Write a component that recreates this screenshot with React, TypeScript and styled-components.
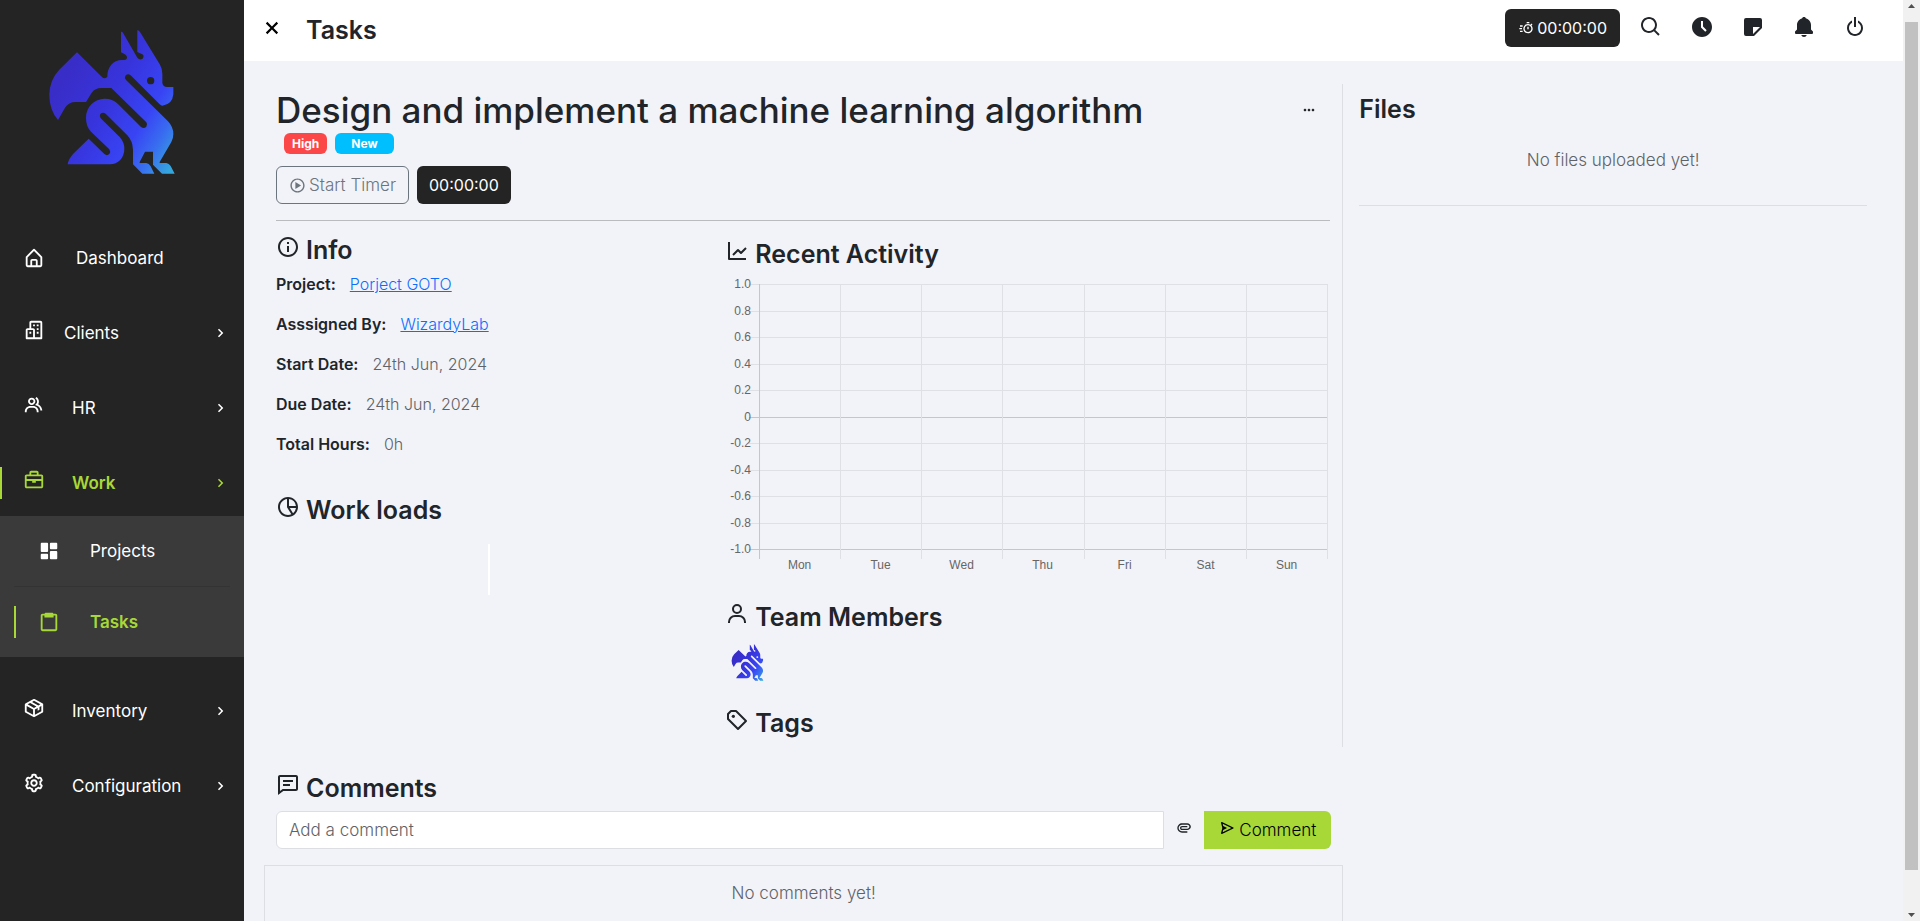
import React, { useId } from 'react';
import styled, { createGlobalStyle, css } from 'styled-components';
import type { IconType } from 'react-icons';
import {
  BiBriefcase,
  BiBuildings,
  BiChevronRight,
  BiClipboard,
  BiCog,
  BiCommentDetail,
  BiDotsHorizontalRounded,
  BiGroup,
  BiHomeAlt,
  BiInfoCircle,
  BiLineChart,
  BiPackage,
  BiPaperclip,
  BiPieChartAlt2,
  BiPlayCircle,
  BiPowerOff,
  BiPurchaseTagAlt,
  BiSearch,
  BiSend,
  BiSolidBell,
  BiSolidDashboard,
  BiSolidNote,
  BiSolidTimeFive,
  BiTimer,
  BiUser,
  BiX,
} from 'react-icons/bi';

const color = {
  dark: '#242424',
  submenu: '#3a3a3a',
  lime: '#a7d837',
  ink: '#212529',
  muted: '#5f6368',
  page: '#f2f3f8',
  line: '#dcdee3',
  link: '#0d6efd',
};

const GlobalStyle = createGlobalStyle`
  *, *::before, *::after { box-sizing: border-box; }
  body {
    margin: 0;
    background: ${color.page};
    color: ${color.ink};
    font-family: Inter, "Open Sans", sans-serif;
    font-size: 17px;
    line-height: 24px;
  }
  h1, h2, p, ul, dl, dd, dt { margin: 0; padding: 0; }
  ul { list-style: none; }
  a { color: inherit; text-decoration: none; }
  button, input { font: inherit; color: inherit; margin: 0; }
  button { border: 0; padding: 0; background: none; cursor: pointer; }
  svg { display: block; flex: none; }
`;

const Shell = styled.div`
  display: flex;
  height: 100vh;
  overflow: hidden;
`;

/* ---------- sidebar ---------- */

const Sidebar = styled.aside`
  flex: 0 0 244px;
  background: ${color.dark};
  color: #fff;
`;

const Brand = styled.a`
  display: block;
  width: 130px;
  margin: 29px 0 50px 47px;
`;

const NavList = styled.ul`
  display: flex;
  flex-direction: column;
  gap: 9px;
`;

const activeBar = css`
  color: ${color.lime};
  font-weight: 600;
  &::before {
    content: '';
    position: absolute;
    left: 0;
    top: 50%;
    width: 2px;
    height: 32px;
    margin-top: -16px;
    background: ${color.lime};
  }
`;

const NavLink = styled.a<{ $active?: boolean; $gap: number }>`
  position: relative;
  display: flex;
  align-items: center;
  height: 66px;
  padding: 0 15px 0 23px;
  gap: ${p => p.$gap}px;
  ${p => p.$active && activeBar}
`;

const NavIcon = styled.span<{ $raised?: boolean }>`
  padding-bottom: ${p => (p.$raised ? 6 : 0)}px;
`;

const NavLabel = styled.span`
  flex: 1;
`;

const SubList = styled.ul`
  margin-bottom: 12px;
  padding: 0 14px;
  background: ${color.submenu};
`;

const SubItem = styled.li`
  & + & { border-top: 1px solid #333; }
`;

const SubLink = styled.a<{ $active?: boolean }>`
  position: relative;
  display: flex;
  align-items: center;
  gap: 30px;
  height: 70px;
  padding: 0 0 0 24px;
  ${p => p.$active && activeBar}
`;

/* ---------- top bar ---------- */

const Page = styled.div`
  flex: 1;
  min-width: 0;
`;

const TopBar = styled.header`
  display: flex;
  align-items: center;
  height: 61px;
  padding: 0 36px 6px 15px;
  background: #fff;
`;

const CloseButton = styled.button`
  color: #000;
`;

const PageTitle = styled.p`
  flex: 1;
  padding: 5px 0 0 21px;
  font-size: 25px;
  font-weight: 600;
  line-height: 30px;
`;

const IconBar = styled.nav`
  display: flex;
  gap: 27px;
  margin-left: 19px;
  padding-bottom: 2px;
`;

const timerBox = css`
  display: inline-flex;
  align-items: center;
  justify-content: center;
  height: 38px;
  border-radius: 6px;
`;

const DarkTimer = styled.button<{ $pad: number }>`
  ${timerBox}
  gap: 3px;
  padding: 0 ${p => p.$pad}px;
  background: ${color.dark};
  color: #fff;
  font-size: 16px;
`;

const StartTimer = styled.button`
  ${timerBox}
  gap: 3px;
  width: 133px;
  border: 1px solid #6c757d;
  color: #6c757d;
  font-weight: 300;
`;

/* ---------- content ---------- */

const Content = styled.div`
  display: grid;
  grid-template-columns: 2fr 1fr;
  align-items: start;
  padding: 23px 20px 0;
`;

const Details = styled.section`
  padding: 5px 12px 9px;
  border-right: 1px solid ${color.line};
`;

const TitleRow = styled.div`
  display: flex;
  align-items: center;
  justify-content: space-between;
  padding-right: 13px;
`;

const TaskTitle = styled.h1`
  font-size: 35px;
  font-weight: 500;
  line-height: 42px;
`;

const Badges = styled.div`
  display: flex;
  gap: 8px;
  margin: 2px 0 12px 8px;
`;

const Badge = styled.span<{ $bg: string; $pad: number }>`
  padding: 0 ${p => p.$pad}px;
  border-radius: 6px;
  background: ${p => p.$bg};
  color: #fff;
  font-size: 12px;
  font-weight: 700;
  line-height: 21px;
`;

const Actions = styled.div`
  display: flex;
  gap: 8px;
  padding-bottom: 16px;
  border-bottom: 1px solid #babbbf;
`;

const Columns = styled.div`
  display: grid;
  grid-template-columns: 5fr 7fr;
  margin: 0 -12px;
`;

const Column = styled.div<{ $top: number }>`
  min-width: 0;
  padding: ${p => p.$top}px 12px 0;
`;

const HeadingRow = styled.h2<{ $top?: number }>`
  display: flex;
  align-items: center;
  gap: 6px;
  height: 30px;
  margin-top: ${p => p.$top ?? 0}px;
  font-size: 25px;
  font-weight: 600;
  line-height: 30px;
  svg { margin-bottom: 6px; }
`;

const Facts = styled.dl`
  display: grid;
  gap: 16px;
  margin-top: 7px;
`;

const Fact = styled.div`
  display: flex;
  gap: 14px;
  font-size: 16px;
`;

const FactName = styled.dt`
  font-weight: 600;
`;

const FactValue = styled.dd`
  color: ${color.muted};
  font-weight: 300;
`;

const FactLink = styled.a`
  color: ${color.link};
  text-decoration: underline;
`;

const WorkLoadBar = styled.div`
  width: 2px;
  height: 51px;
  margin: 19px auto 0;
  background: #fff;
`;

const Chart = styled.svg`
  width: 100%;
  height: auto;
  margin-top: 6px;
  font-family: "Liberation Sans", Arial, sans-serif;
  font-size: 12px;
  fill: #666;
`;

const Members = styled.div`
  display: flex;
  height: 48px;
  margin-top: 6px;
  padding: 6px;
`;

const Member = styled.a`
  width: 33px;
`;

const SideTitle = styled.h2`
  margin-top: 10px;
  font-size: 25px;
  font-weight: 600;
  line-height: 30px;
`;

const Files = styled.aside`
  padding: 0 16px;
`;

const EmptyNote = styled.p`
  color: ${color.muted};
  font-weight: 300;
  text-align: center;
`;

const FilesBody = styled.div`
  padding: 24px 0 33px;
  border-bottom: 1px solid ${color.line};
`;

const Comments = styled.section`
  grid-column: 1;
`;

const CommentForm = styled.form`
  display: flex;
  align-items: center;
  margin: 8px 12px 16px;
`;

const CommentHead = styled.div`
  padding: 26px 12px 0;
`;

const CommentInput = styled.input`
  flex: 1;
  min-width: 0;
  height: 38px;
  padding: 0 12px;
  border: 1px solid ${color.line};
  border-radius: 6px 0 0 6px;
  background: #fff;
  font-weight: 300;
  &::placeholder { color: ${color.muted}; opacity: 1; }
`;

const AttachButton = styled.button`
  display: flex;
  justify-content: center;
  width: 40px;
  padding-bottom: 4px;
`;

const SendButton = styled.button`
  display: flex;
  align-items: center;
  justify-content: center;
  gap: 4px;
  width: 127px;
  height: 38px;
  border-radius: 0 6px 6px 0;
  background: ${color.lime};
  color: #000;
  font-weight: 300;
  svg { margin-bottom: 4px; }
`;

const CommentList = styled.div`
  height: 92px;
  padding-top: 15px;
  border: 1px solid ${color.line};
`;

/* ---------- scroll bar ---------- */

const ScrollTrack = styled.div`
  display: flex;
  flex-direction: column;
  flex: 0 0 17px;
  align-items: center;
  justify-content: space-between;
  padding: 4px 2px;
  background: #f1f1f1;
`;

const ScrollThumb = styled.div`
  flex: 1;
  width: 13px;
  margin: 14px 0 43px;
  background: #c1c1c1;
`;

function Logo() {
  const id = useId();
  return (
    <svg viewBox="140 88 390 438" width="100%" role="img" aria-label="WizardyLab">
      <defs>
        <linearGradient id={id} gradientUnits="userSpaceOnUse" x1="190" y1="240" x2="540" y2="460">
          <stop offset="0" stopColor="#392dc8" />
          <stop offset="0.35" stopColor="#3734dc" />
          <stop offset="0.65" stopColor="#3844f4" />
          <stop offset="0.82" stopColor="#386cf0" />
          <stop offset="1" stopColor="#35a6dc" />
        </linearGradient>
      </defs>
      <path
        fill={`url(#${id})`}
        fillRule="evenodd"
        d="M230 158L304 231Q313 240 321 231C321 203 338 181 365 181L372 181Q381 180 380 172Q380 166 362 158L362 97Q366 95 370 103L411 174Q418 183 427 177Q433 168 426 164L411 157L411 92Q415 91 419 97L479 195Q486 208 486 222L486 250Q488 262 500 262L519 262L519 284Q516 315 486 318Q482 318 478 314L391 227Q383 220 376 227Q371 234 377 241L503 365Q519 382 519 403Q519 416 513 427L478 487L478 490L498 490Q506 491 511 499L523 522L485 522L458 495L458 456L434 456L418 487L418 490L438 490Q446 491 451 500L462 522L426 522L398 494L398 450Q397 424 381 407L316 342Q307 336 300 343Q296 350 301 356L358 412Q372 428 372 447C372 474 354 494 328 494L202 494Q204 478 219 462L265 417L312 463Q320 470 327 463Q332 456 327 449L272 396Q257 380 257 354C257 322 282 297 313 297Q336 297 352 312L422 382Q431 388 438 381Q443 374 438 368L333 265L302 265Q285 265 274 279L257 307L225 307Q205 307 194 324L173 361Q147 330 147 285Q148 240 177 210ZM462 243A11 11 0 1 0 440 243A11 11 0 1 0 462 243Z"
      />
    </svg>
  );
}

type NavEntry = { label: string; icon: IconType; gap: number; active?: boolean; children?: boolean };

const primary: NavEntry[] = [
  { label: 'Dashboard', icon: BiHomeAlt, gap: 31 },
  { label: 'Clients', icon: BiBuildings, gap: 19, children: true },
  { label: 'HR', icon: BiGroup, gap: 27, children: true },
  { label: 'Work', icon: BiBriefcase, gap: 27, children: true, active: true },
  { label: 'Inventory', icon: BiPackage, gap: 27, children: true },
  { label: 'Configuration', icon: BiCog, gap: 27, children: true },
];

function SideNav() {
  return (
    <NavList>
      {primary.map(({ label, icon: Icon, gap, active, children }) => (
        <li key={label}>
          <NavLink href="#" $gap={gap} $active={active}>
            <NavIcon $raised={children}><Icon size={22} /></NavIcon>
            <NavLabel>{label}</NavLabel>
            {children && <BiChevronRight size={18} />}
          </NavLink>
          {active && (
            <SubList>
              <SubItem>
                <SubLink href="#"><BiSolidDashboard size={22} />Projects</SubLink>
              </SubItem>
              <SubItem>
                <SubLink href="#" $active><BiClipboard size={22} />Tasks</SubLink>
              </SubItem>
            </SubList>
          )}
        </li>
      ))}
    </NavList>
  );
}

const days = ['Mon', 'Tue', 'Wed', 'Thu', 'Fri', 'Sat', 'Sun'];
const levels = ['1.0', '0.8', '0.6', '0.4', '0.2', '0', '-0.2', '-0.4', '-0.6', '-0.8', '-1.0'];
const plot = { left: 34, right: 602, top: 9, bottom: 274 };

function ActivityChart() {
  const dx = (plot.right - plot.left) / days.length;
  const dy = (plot.bottom - plot.top) / (levels.length - 1);
  const soft = '#dfe0e5';
  const strong = '#c4c6ca';
  return (
    <Chart viewBox="0 0 605 300" role="img" aria-label="Recent activity by day">
      {levels.map((level, i) => {
        const y = Math.round(plot.top + dy * i);
        const stroke = level === '0' || level === '-1.0' ? strong : soft;
        return (
          <g key={level}>
            <line x1={plot.left - 10} x2={plot.right} y1={y + 0.5} y2={y + 0.5} stroke={stroke} />
            <text x={plot.left - 8} y={y + 4} textAnchor="end">{level}</text>
          </g>
        );
      })}
      {[...days, ''].map((day, i) => {
        const x = Math.round(plot.left + dx * i);
        return (
          <g key={day}>
            <line x1={x + 0.5} x2={x + 0.5} y1={plot.top} y2={plot.bottom + 10} stroke={i ? soft : strong} />
            <text x={x + dx / 2} y={plot.bottom + 20} textAnchor="middle">{day}</text>
          </g>
        );
      })}
    </Chart>
  );
}

function Heading({ icon: Icon, top, children }: { icon: IconType; top?: number; children: React.ReactNode }) {
  return <HeadingRow $top={top}><Icon size={24} />{children}</HeadingRow>;
}

const tools: [string, IconType][] = [
  ['Search', BiSearch],
  ['Time', BiSolidTimeFive],
  ['Notes', BiSolidNote],
  ['Notifications', BiSolidBell],
  ['Log out', BiPowerOff],
];

const facts: { name: string; value: string; link?: boolean }[] = [
  { name: 'Project:', value: 'Porject GOTO', link: true },
  { name: 'Asssigned By:', value: 'WizardyLab', link: true },
  { name: 'Start Date:', value: '24th Jun, 2024' },
  { name: 'Due Date:', value: '24th Jun, 2024' },
  { name: 'Total Hours:', value: '0h' },
];

export default function App() {
  return (
    <>
      <GlobalStyle />
      <Shell>
        <Sidebar>
          <Brand href="#"><Logo /></Brand>
          <SideNav />
        </Sidebar>

        <Page>
          <TopBar>
            <CloseButton aria-label="Close menu"><BiX size={26} /></CloseButton>
            <PageTitle>Tasks</PageTitle>
            <DarkTimer $pad={13}><BiTimer size={16} />00:00:00</DarkTimer>
            <IconBar>
              {tools.map(([label, Icon]) => (
                <button key={label} aria-label={label}><Icon size={24} /></button>
              ))}
            </IconBar>
          </TopBar>

          <Content>
            <Details>
              <TitleRow>
                <TaskTitle>Design and implement a machine learning algorithm</TaskTitle>
                <button aria-label="More options"><BiDotsHorizontalRounded size={16} /></button>
              </TitleRow>
              <Badges>
                <Badge $bg="#fb4748" $pad={8}>High</Badge>
                <Badge $bg="#00bfff" $pad={16}>New</Badge>
              </Badges>
              <Actions>
                <StartTimer><BiPlayCircle size={17} />Start Timer</StartTimer>
                <DarkTimer $pad={12}>00:00:00</DarkTimer>
              </Actions>

              <Columns>
                <Column $top={14}>
                  <Heading icon={BiInfoCircle}>Info</Heading>
                  <Facts>
                    {facts.map(f => (
                      <Fact key={f.name}>
                        <FactName>{f.name}</FactName>
                        <FactValue>{f.link ? <FactLink href="#">{f.value}</FactLink> : f.value}</FactValue>
                      </Fact>
                    ))}
                  </Facts>
                  <Heading icon={BiPieChartAlt2} top={39}>Work loads</Heading>
                  <WorkLoadBar />
                </Column>
                <Column $top={18}>
                  <Heading icon={BiLineChart}>Recent Activity</Heading>
                  <ActivityChart />
                  <Heading icon={BiUser} top={27}>Team Members</Heading>
                  <Members>
                    <Member href="#"><Logo /></Member>
                  </Members>
                  <Heading icon={BiPurchaseTagAlt} top={22}>Tags</Heading>
                </Column>
              </Columns>
            </Details>

            <Files>
              <SideTitle>Files</SideTitle>
              <FilesBody>
                <EmptyNote>No files uploaded yet!</EmptyNote>
              </FilesBody>
            </Files>

            <Comments>
              <CommentHead>
                <Heading icon={BiCommentDetail}>Comments</Heading>
              </CommentHead>
              <CommentForm>
                <CommentInput aria-label="Add a comment" placeholder="Add a comment" />
                <AttachButton type="button" aria-label="Attach a file"><BiPaperclip size={16} /></AttachButton>
                <SendButton type="button"><BiSend size={16} />Comment</SendButton>
              </CommentForm>
              <CommentList>
                <EmptyNote>No comments yet!</EmptyNote>
              </CommentList>
            </Comments>
          </Content>
        </Page>

        <ScrollTrack aria-hidden="true">
          <svg width="7" height="4" viewBox="0 0 7 4"><path d="M0 4L3.500 0L7 4Z" fill="#505050" /></svg>
          <ScrollThumb />
          <svg width="7" height="4" viewBox="0 0 7 4"><path d="M0 0L3.500 4L7 0Z" fill="#505050" /></svg>
        </ScrollTrack>
      </Shell>
    </>
  );
}
